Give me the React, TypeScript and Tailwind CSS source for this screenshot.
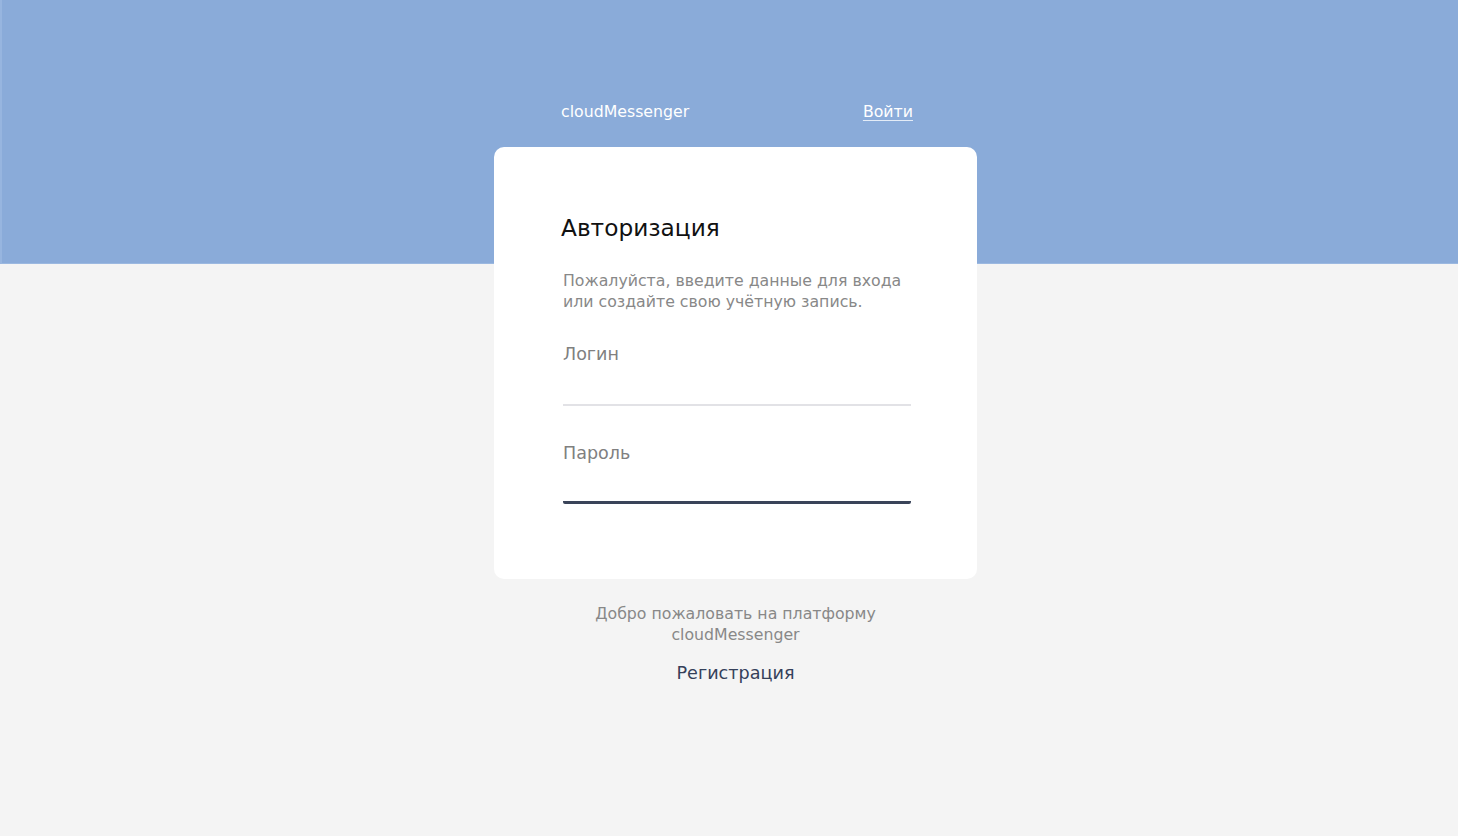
import React from 'react';

const font = { fontFamily: '"DejaVu Sans", Verdana, sans-serif' };

const App = () => {
  return (
    <div className="min-h-screen bg-[#f4f4f4]" style={font}>
      <div className="h-[264px] bg-[#8aabd9] border-l-2 border-b border-l-[#97b5df] border-b-[#9bb8e0]">
        <div className="flex justify-center pl-[13px] pt-[100px]">
          <nav className="w-[483px] flex items-center justify-between pl-[66px] pr-[65px]">
            <span className="text-[15.75px] leading-6 text-white">cloudMessenger</span>
            <a href="#" className="text-[15.75px] leading-6 text-white underline underline-offset-[3px] decoration-[#e4ecf7]">
              Войти
            </a>
          </nav>
        </div>
      </div>

      <div className="flex justify-center pl-[13px] -mt-[117px]">
        <div className="w-[483px] flex flex-col items-center">
          <div className="w-full bg-white rounded-[10px] pt-[67px] pb-[75px] pl-[67px] pr-[64px]">
            <h1 className="text-[23.25px] leading-7 text-[#111]">Авторизация</h1>
            <p className="ml-[2px] mt-[28px] text-[15.75px] leading-[21px] text-[#888]">
              Пожалуйста, введите данные для входа или создайте свою учётную запись.
            </p>
            <form className="ml-[2px] mr-[2px] mt-[30px] flex flex-col">
              <label className="flex flex-col">
                <span className="text-[17.5px] leading-6 text-[#808080]">Логин</span>
                <input
                  type="text"
                  className="h-[40px] w-full bg-transparent outline-none border-b-2 border-[#e2e2e6] text-[16px]"
                />
              </label>
              <label className="mt-[35px] flex flex-col">
                <span className="text-[17.5px] leading-6 text-[#808080]">Пароль</span>
                <input
                  type="password"
                  className="h-[39px] w-full bg-transparent outline-none border-b-[3px] border-[#3a4459] rounded-b-[2px] text-[16px]"
                />
              </label>
            </form>
          </div>

          <p className="mt-[24px] text-center text-[15.75px] leading-[21px] text-[#888] w-[300px]">
            Добро пожаловать на платформу cloudMessenger
          </p>
          <a href="#" className="mt-[16px] text-[17.6px] leading-6 text-[#34405a]">
            Регистрация
          </a>
        </div>
      </div>
    </div>
  );
};

export default App;
